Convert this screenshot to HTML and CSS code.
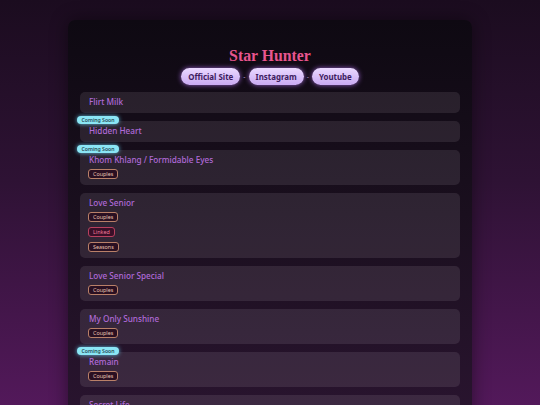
FILE: index.html
```html
<!DOCTYPE html>
<html lang="en">
<head>
<meta charset="utf-8">
<title>Star Hunter</title>
<link rel="stylesheet" href="styles.css">
</head>
<body>
<main class="panel">
  <h1 class="brand">Star Hunter</h1>
  <nav class="links">
    <a class="pill" href="#">Official Site</a>
    <span class="sep">-</span>
    <a class="pill" href="#">Instagram</a>
    <span class="sep">-</span>
    <a class="pill" href="#">Youtube</a>
  </nav>
  <ul class="series">
    <li class="card"><div class="name">Flirt Milk</div></li>
    <li class="card"><span class="soon">Coming Soon</span><div class="name">Hidden Heart</div></li>
    <li class="card"><span class="soon">Coming Soon</span><div class="name">Khom Khlang / Formidable Eyes</div>
      <div class="tags"><span class="tag">Couples</span></div></li>
    <li class="card"><div class="name">Love Senior</div>
      <div class="tags"><span class="tag">Couples</span><span class="tag linked">Linked</span><span class="tag">Seasons</span></div></li>
    <li class="card"><div class="name">Love Senior Special</div>
      <div class="tags"><span class="tag">Couples</span></div></li>
    <li class="card"><div class="name">My Only Sunshine</div>
      <div class="tags"><span class="tag">Couples</span></div></li>
    <li class="card"><span class="soon">Coming Soon</span><div class="name">Remain</div>
      <div class="tags"><span class="tag">Couples</span></div></li>
    <li class="card"><div class="name">Secret Life</div>
      <div class="tags"><span class="tag">Couples</span></div></li>
  </ul>
</main>
</body>
</html>
```

FILE: styles.css
```css
html, body {
  margin: 0;
  padding: 0;
}
body {
  min-height: 405px;
  background: linear-gradient(180deg, #1b0c1f 0%, #2e1234 40%, #5a1a62 100%);
  font-family: "Noto Sans", "DejaVu Sans", sans-serif;
  overflow: hidden;
}
.panel {
  width: 404px;
  margin: 20px auto 0;
  padding: 26px 12px 20px;
  box-sizing: border-box;
  border-radius: 7px;
  background: linear-gradient(180deg, #0e0912 0%, #1a0f1e 45%, #2c1532 100%);
  box-shadow: 0 0 18px rgba(0, 0, 0, 0.45);
  min-height: 420px;
}
.brand {
  margin: 0 0 2px;
  text-align: center;
  font-family: "Liberation Serif", "DejaVu Serif", serif;
  font-weight: bold;
  font-size: 15.8px;
  line-height: 20px;
  color: #e8558e;
}
.links {
  display: flex;
  justify-content: center;
  align-items: center;
  gap: 2px;
  height: 17px;
  margin-bottom: 7px;
}
.pill {
  display: flex;
  align-items: center;
  height: 17px;
  padding: 0 7px;
  border-radius: 9px;
  background: linear-gradient(180deg, #ead9ff 0%, #c9a9f2 100%);
  box-shadow: 0 0 5px rgba(190, 120, 255, 0.75);
  color: #3d1b5e;
  text-decoration: none;
  font-size: 7.9px;
  font-weight: bold;
}
.sep {
  color: #b89ad0;
  font-size: 7px;
  padding: 0 1px;
}
.series {
  list-style: none;
  margin: 0;
  padding: 0;
  display: flex;
  flex-direction: column;
  gap: 8px;
}
.card {
  position: relative;
  padding: 4px 8px 6px 9px;
  border-radius: 5px;
  background: rgba(255, 240, 255, 0.095);
}
.name {
  font-size: 8.2px;
  line-height: 11px;
  color: #b06ad8;
  font-weight: 500;
}
.tags {
  display: flex;
  flex-direction: column;
  align-items: flex-start;
  gap: 5px;
  margin-top: 4px;
  margin-left: -1px;
}
.tag {
  display: flex;
  align-items: center;
  height: 10px;
  box-sizing: border-box;
  padding: 0 4px;
  border: 1px solid #b98068;
  border-radius: 3px;
  background: #2a1022;
  color: #e9c2b0;
  font-size: 5.4px;
}
.tag.linked {
  border-color: #b8405f;
  background: #3a0f28;
  color: #f07a9a;
}
.soon {
  position: absolute;
  top: -5px;
  left: -3px;
  height: 8px;
  padding: 0 4.5px;
  border-radius: 4px;
  background: #8be6f5;
  box-shadow: 0 0 4px rgba(110, 220, 255, 0.8);
  color: #14323c;
  font-size: 5.2px;
  line-height: 8px;
  font-weight: 500;
}
```
